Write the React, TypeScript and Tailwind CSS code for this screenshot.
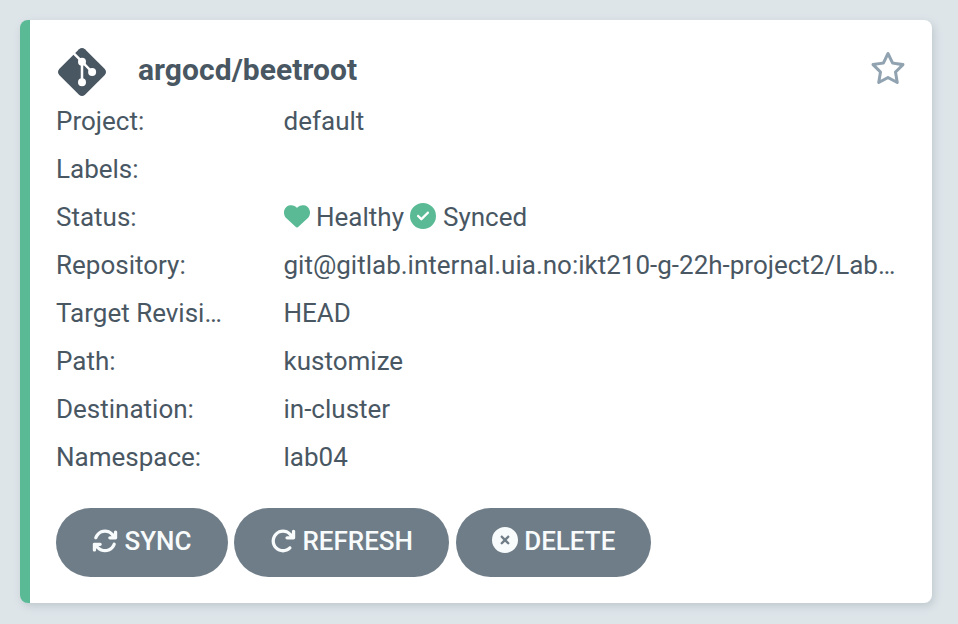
import { FaArrowsRotate, FaArrowRotateRight, FaCircleCheck, FaCircleXmark, FaHeart, FaRegStar } from "react-icons/fa6";
import type { ReactNode } from "react";

function GitIcon() {
  return (
    <svg viewBox="0 0 48 48" className="mb-px ml-[2px] size-[48px]" fill="none">
      <path d="M21 1.2Q24-1.2 27 1.2L46.8 21Q49.2 24 46.8 27L27 46.8Q24 49.2 21 46.8L1.2 27Q-1.2 24 1.2 21Z" fill="#495763" />
      <path d="M15.5 5.2L24 13.7L34 24M24 13.7V34.3" stroke="white" strokeWidth="2.5" />
      <circle cx="24" cy="13.7" r="4" fill="white" />
      <circle cx="34.1" cy="24" r="4" fill="white" />
      <circle cx="24" cy="34.3" r="4" fill="white" />
    </svg>
  );
}

function Row({ label, children }: { label: string; children?: ReactNode }) {
  return (
    <div className="flex h-12 items-center whitespace-nowrap">
      <div className="w-[227.5px] shrink-0">{label}</div>
      <div className="flex items-center">{children}</div>
    </div>
  );
}

function Action({ className, icon, label }: { className: string; icon: ReactNode; label: string }) {
  return (
    <button className={`flex h-[69px] items-center justify-center rounded-full bg-[#6f7d88] pb-[2px] text-[26px] font-medium text-[#f8fbfb] ${className}`}>
      {icon}
      <span>{label}</span>
    </button>
  );
}

export default function App() {
  return (
    <main className="h-[624px] w-[958px] bg-[#dee5e9] pt-5 pl-5 font-['Roboto',sans-serif] text-[26px] text-[#495763]">
      <section className="h-[583px] w-[912px] rounded-[8px] border-l-[10px] border-[#59ba95] bg-white pt-[27px] pr-[26px] pl-[26px] shadow-[2px_3px_8px_#bdc8cd]">
        <header className="flex h-[50px] items-center">
          <GitIcon />
          <h1 className="ml-[32px] flex-1 pb-[5px] text-[30px] font-bold tracking-[0.05px]">argocd/beetroot</h1>
          <FaRegStar className="mb-[8px] size-[36px] text-[#91a3b1]" />
        </header>
        <div>
          <Row label="Project:">default</Row>
          <Row label="Labels:" />
          <Row label="Status:">
            <FaHeart className="mr-[6.5px] mb-[2px] size-[26px] text-[#59ba95]" />
            <span>Healthy</span>
            <FaCircleCheck className="mr-[6.5px] ml-[6.5px] mb-[2px] size-[26px] text-[#59ba95]" />
            <span>Synced</span>
          </Row>
          <Row label="Repository:">git@gitlab.internal.uia.no:ikt210-g-22h-project2/Lab…</Row>
          <Row label="Target Revisi…">HEAD</Row>
          <Row label="Path:">kustomize</Row>
          <Row label="Destination:">in-cluster</Row>
          <Row label="Namespace:">lab04</Row>
        </div>
        <div className="mt-[27px] flex">
          <Action className="mr-[6px] w-[172px]" label="SYNC" icon={<FaArrowsRotate className="mr-[6px] mb-[2px] size-[26px]" />} />
          <Action className="mr-[7px] w-[215px]" label="REFRESH" icon={<FaArrowRotateRight className="mr-[6.5px] mb-[2px] size-[26px]" />} />
          <Action className="w-[195px]" label="DELETE" icon={<FaCircleXmark className="mr-[6.5px] mb-[3px] size-[26px]" />} />
        </div>
      </section>
    </main>
  );
}
